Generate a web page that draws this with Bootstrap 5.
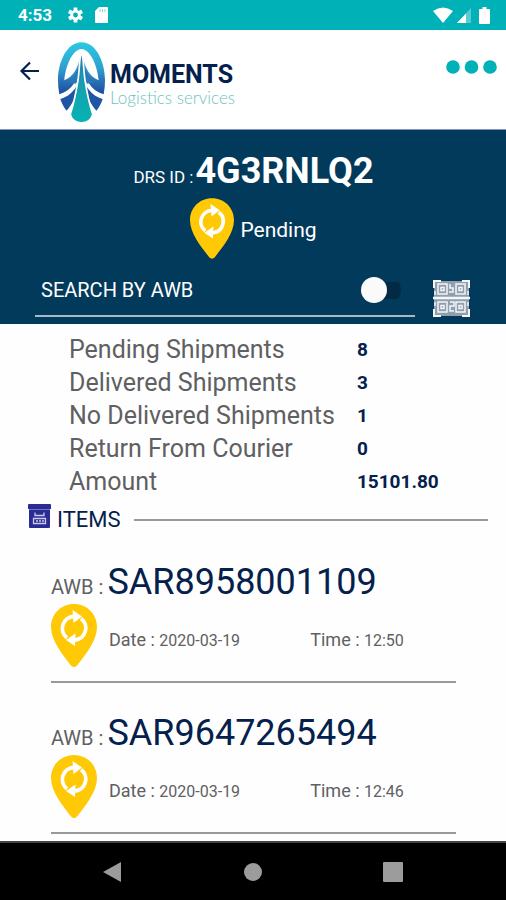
<!DOCTYPE html>
<html lang="en">
<head>
<meta charset="utf-8">
<meta name="viewport" content="width=device-width, initial-scale=1">
<title>Moments Logistics – DRS</title>
<link rel="stylesheet" href="https://cdn.jsdelivr.net/npm/bootstrap@5.3.0/dist/css/bootstrap.min.css">
<style>
  :root { --teal: #00b1b8; --navy: #023a5b; --ink: #04204c; --muted: #5f6062; }
  body { font-family: Roboto, "Liberation Sans", sans-serif; color: var(--muted); background: #fefefe; }
  svg { display: block; flex: none; }
  .status-bar { background: var(--teal); height: 30px; padding: 0 16px 0 18px; font-size: 17px; line-height: 30px; }
  .app-header { height: 100px; padding: 0 9px 0 19px; background: #fff; border-bottom: 1px solid #8c93c8; }
  .brand { gap: 4px; margin-left: 17px; color: var(--ink); padding-top: 4px; }
  .brand-name { font-size: 25px; line-height: 24px; font-weight: 700; }
  .brand-sub { font-family: Lato, sans-serif; font-size: 17px; line-height: 21px; font-weight: 300; color: #6cc4c0; }
  .icon-btn { background: none; border: 0; padding: 0; }
  .more-btn { margin-bottom: 26px; }
  .back-btn { margin-bottom: 18px; }
  .drs-panel { background: var(--navy); padding: 20px 34px 7px 35px; }
  .drs-title { font-size: 17px; line-height: 18px; font-weight: 400; gap: 2px; }
  .drs-title strong { font-size: 36px; line-height: 42px; }
  .drs-status { font-size: 21px; gap: 6px; margin-top: 6px; }
  .search-row { gap: 18px; margin-top: 6px; padding-right: 2px; }
  .search-field { height: 52px; border-bottom: 2px solid #a9b8c8; padding: 0 14px 0 6px; font-size: 20px; }
  .awb-switch { appearance: none; width: 40px; height: 26px; margin: 0; border-radius: 13px; display: flex; align-items: center;
    background: linear-gradient(#022a44, #022a44) center right / 28px 17px no-repeat; }
  .awb-switch::before { content: ""; width: 26px; height: 26px; border-radius: 50%; background: #fafafa; }
  .awb-switch:checked { justify-content: flex-end; }
  .totals { margin: 9px 0 0 69px; font-size: 25px; line-height: 33px; }
  .totals th { font-weight: 400; padding: 0 22px 0 0; }
  .totals td { font-size: 19px; font-weight: 700; color: var(--ink); padding: 0; }
  .items-head { padding: 4px 18px 0 28px; gap: 6px; margin-top: 5px; height: 29px; }
  .items-head h2 { font-size: 22px; line-height: 25px; margin: 0 7px 0 0; color: var(--ink); font-weight: 400; }
  .rule { height: 2px; background: #98999c; }
  .awb-list { margin: 0 50px 0 51px; }
  .awb-item { padding: 29px 0 14px; border-bottom: 2px solid #98999c; }
  .awb-no { font-size: 20px; line-height: 20px; font-weight: 400; margin: 0; gap: 4px; }
  .awb-no a { font-size: 36px; line-height: 42px; color: var(--ink); }
  .awb-meta { height: 64px; gap: 12px; font-size: 18px; padding-top: 1px; }
  .awb-meta small { font-size: 16px; }
  .awb-meta .when { flex: 0 0 58%; }
  .sys-nav { background: #000; height: 59px; border-top: 2px solid #444; padding: 0 103px 0 100px; }
</style>
</head>
<body class="d-flex flex-column min-vh-100">
<svg class="d-none" aria-hidden="true">
  <symbol id="pin" viewBox="0 0 46 63">
    <path fill="#ffc905" d="M23 0C10 0 0 10 0 23c0 14 12 28 20 38.500q3 3 6 0C34 51 46 37 46 23 46 10 36 0 23 0z"/>
    <g fill="none" stroke="#fff" stroke-width="3.800">
      <path d="M16 34A12 12 0 0 1 23 12.500"/><path d="M30 14.500A12 12 0 0 1 24 36"/>
    </g>
    <path fill="#fff" d="M21.500 6l9.500 6.500-8.500 6.500zM24.500 29.500l-9.500 6.500 9 6z"/>
  </symbol>
</svg>

<div class="status-bar d-flex align-items-center text-white fw-bold">
  <span>4:53</span>
  <svg class="ms-3" width="15" height="16" viewBox="0 0 16 16" aria-hidden="true"><g stroke="#fff" stroke-width="4"><path d="M8 0v16M1 4l14 8M15 4L1 12"/></g><circle cx="8" cy="8" r="5.500" fill="#fff"/><circle cx="8" cy="8" r="2.600" fill="#00b1b8"/></svg>
  <svg class="ms-2" width="18" height="16" viewBox="-4 0 18 16" aria-hidden="true"><path fill="#fff" d="M4 0h8q1 0 1 1v14q0 1-1 1H1q-1 0-1-1V4z"/><path stroke="#00b1b8" opacity=".5" d="M5 2v3M7.500 2v3M10 2v3"/></svg>
  <svg class="ms-auto" width="20" height="16" viewBox="0 0 20 16" aria-hidden="true"><path fill="#fff" d="M0 4q10-7 20 0L10 16z"/></svg>
  <svg class="ms-1" width="14" height="15" viewBox="0 0 14 15" aria-hidden="true"><path fill="#fff" opacity=".35" d="M14 0v15H0z"/><path fill="#fff" d="M9 5.400V15H0z"/></svg>
  <svg class="ms-2" width="11" height="17" viewBox="0 0 11 17" aria-hidden="true"><path fill="#fff" d="M3.500 0h4v2H10q1 0 1 1v13q0 1-1 1H1q-1 0-1-1V3q0-1 1-1h2.500z"/></svg>
</div>

<header class="app-header d-flex align-items-center">
  <button class="icon-btn back-btn" type="button" aria-label="Back">
    <svg width="21" height="20" viewBox="0 0 21 20"><path d="M20 10H3M11 1.500L2.500 10l8.500 8.500" fill="none" stroke="#04204c" stroke-width="2.200"/></svg>
  </button>
  <div class="brand d-flex align-items-center">
    <svg width="49" height="82" viewBox="174 122 148 246" aria-hidden="true">
      <defs>
        <linearGradient id="ring" x1="0" y1="0" x2="0" y2="1"><stop offset="0" stop-color="#2bcae2"/><stop offset=".5" stop-color="#2f9fd0"/><stop offset=".8" stop-color="#2668b2"/><stop offset="1" stop-color="#1d4c9e"/></linearGradient>
        <linearGradient id="stem" x1="0" y1="0" x2="0" y2="1"><stop offset="0" stop-color="#2a78b0"/><stop offset=".45" stop-color="#169fae"/><stop offset="1" stop-color="#06b3b4"/></linearGradient>
      </defs>
      <path fill="url(#ring)" d="M248 125C204 125 177 184 177 240q0 22 4 42C214 272 238 248 246 180h4C258 248 282 272 315 282q4-20 4-42C319 184 292 125 248 125z"/>
      <path fill="#fff" d="M248 145C222 147 201 190 196 240 222 230 237 205 245 165h6C259 205 274 230 300 240 295 190 274 147 248 145z"/>
      <path fill="#2b78b6" d="M244 172C240 205 228 232 208 246L232 250 246 215zM252 172C256 205 268 232 288 246L264 250 250 215z"/>
      <path fill="#1f55a4" d="M184 296C208 289 222 276 238 250 234 285 220 312 203 332 194 320 188 308 184 296zM312 296C288 289 274 276 258 250 262 285 276 312 293 332 302 320 308 308 312 296z"/>
      <path fill="url(#stem)" stroke="#fff" stroke-width="5" d="M248 155C241 170 243 205 237 242 231 280 223 315 214 343 219 360 231 368 248 368S277 360 282 343C273 315 265 280 259 242 253 205 255 170 248 155z"/>
    </svg>
    <div class="pt-2">
      <div class="brand-name">MOMENTS</div>
      <div class="brand-sub">Logistics services</div>
    </div>
  </div>
  <button class="icon-btn more-btn ms-auto" type="button" aria-label="More options">
    <svg width="51" height="14" viewBox="0 0 51 14" fill="#00b1b8"><circle cx="7" cy="7" r="6.800"/><circle cx="25.500" cy="7" r="6.800"/><circle cx="44" cy="7" r="6.800"/></svg>
  </button>
</header>

<main>
  <section class="drs-panel text-white">
    <h1 class="drs-title d-flex justify-content-center align-items-baseline m-0"><span>DRS ID :</span><strong>4G3RNLQ2</strong></h1>
    <div class="drs-status d-flex justify-content-center align-items-center">
      <svg width="44" height="61" aria-hidden="true"><use href="#pin"/></svg>
      <span class="pt-1">Pending</span>
    </div>
    <div class="search-row d-flex align-items-end">
      <div class="search-field d-flex align-items-center flex-grow-1">
        <label for="awbSearch" class="flex-grow-1">SEARCH BY AWB</label>
        <input class="awb-switch" type="checkbox" role="switch" id="awbSearch">
      </div>
      <button class="icon-btn" type="button" aria-label="Scan code">
        <svg width="37" height="37" viewBox="0 0 37 37">
          <path fill="#8f9fae" d="M1 1h35v35H1z"/>
          <g fill="none" stroke="#f4f6f8" stroke-width="1.500">
            <path d="M1 8V1h7M29 1h7v7M1 29v7h7M29 36h7v-7" stroke-width="2"/>
            <path d="M5 4h9v10H5zM23 4h9v10h-9zM5 22h9v10H5zM23 22h9v10h-9zM8 7.500h3v3H8zM26 7.500h3v3h-3zM8 25.500h3v3H8zM26 25.500h3v3h-3z"/>
            <path d="M17 4v4h3v4h-4M17 22h4v4h-4v5h4M2 11v4M35 11v4M2 22v4M35 22v4"/>
            <path d="M0 18h37" stroke-width="2.500"/>
          </g>
        </svg>
      </button>
    </div>
  </section>

  <table class="totals">
    <tbody>
      <tr><th scope="row">Pending Shipments</th><td>8</td></tr>
      <tr><th scope="row">Delivered Shipments</th><td>3</td></tr>
      <tr><th scope="row">No Delivered Shipments</th><td>1</td></tr>
      <tr><th scope="row">Return From Courier</th><td>0</td></tr>
      <tr><th scope="row">Amount</th><td>15101.80</td></tr>
    </tbody>
  </table>

  <div class="items-head d-flex align-items-center">
    <svg class="mb-2" width="23" height="24" viewBox="0 0 23 24" aria-hidden="true">
      <path fill="#2a2c94" d="M1 0h21q1 0 1 1v4H0V1q0-1 1-1zM1 6h21v17q0 1-1 1H2q-1 0-1-1z"/>
      <path stroke="#7476c4" d="M1 5.500h21"/>
      <path fill="none" stroke="#c9caec" stroke-width="1.300" d="M7 8.500v3h9v-3M5.500 14.500h12v5h-12zM8 17h2M11 17h2M14 17h2"/>
    </svg>
    <h2>ITEMS</h2>
    <div class="rule flex-grow-1"></div>
  </div>

  <ul class="awb-list list-unstyled">
    <li class="awb-item">
      <h3 class="awb-no d-flex align-items-baseline"><span>AWB :</span><a class="text-decoration-none" href="#SAR8958001109">SAR8958001109</a></h3>
      <div class="awb-meta d-flex">
        <svg width="46" height="63" aria-hidden="true"><use href="#pin"/></svg>
        <div class="d-flex flex-grow-1 align-items-center pt-2">
          <span class="when">Date : <small>2020-03-19</small></span>
          <span>Time : <small>12:50</small></span>
        </div>
      </div>
    </li>
    <li class="awb-item">
      <h3 class="awb-no d-flex align-items-baseline"><span>AWB :</span><a class="text-decoration-none" href="#SAR9647265494">SAR9647265494</a></h3>
      <div class="awb-meta d-flex">
        <svg width="46" height="63" aria-hidden="true"><use href="#pin"/></svg>
        <div class="d-flex flex-grow-1 align-items-center pt-2">
          <span class="when">Date : <small>2020-03-19</small></span>
          <span>Time : <small>12:46</small></span>
        </div>
      </div>
    </li>
  </ul>
</main>

<nav class="sys-nav mt-auto d-flex justify-content-between align-items-center" aria-label="System">
  <button class="icon-btn" type="button" aria-label="Back"><svg width="22" height="20" viewBox="0 0 22 20"><path fill="#9c9c9c" d="M21 0v20L3 10z"/></svg></button>
  <button class="icon-btn" type="button" aria-label="Home"><svg width="18" height="18"><circle cx="9" cy="9" r="9" fill="#9c9c9c"/></svg></button>
  <button class="icon-btn" type="button" aria-label="Recent apps"><svg width="20" height="20"><rect width="20" height="20" rx="1" fill="#9c9c9c"/></svg></button>
</nav>
<script src="https://cdn.jsdelivr.net/npm/bootstrap@5.3.0/dist/js/bootstrap.bundle.min.js"></script>
</body>
</html>
